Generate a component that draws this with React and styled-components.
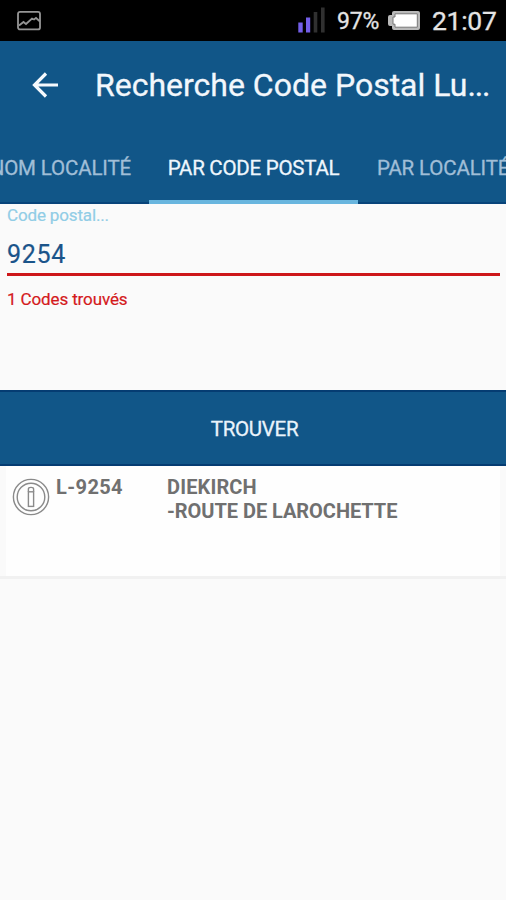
import React from "react";
import styled, { createGlobalStyle } from "styled-components";

const blue = "#115688";

const GlobalStyle = createGlobalStyle`
  * { box-sizing: border-box; }
  body { margin: 0; background: #fafafa; overflow: hidden; }
`;

const Screen = styled.main`
  width: 506px;
  height: 900px;
  overflow: hidden;
  background: #fafafa;
  font-family: Roboto, sans-serif;
  display: flex;
  flex-direction: column;
`;

const StatusBar = styled.div`
  height: 41px;
  flex: none;
  background: #000;
  color: #e4e4e4;
  display: flex;
  align-items: center;
  padding: 0 10px 0 16px;
`;

const SignalIcon = styled.svg`
  margin-left: auto;
  margin-right: 11px;
  margin-top: -2px;
`;

const StatusText = styled.span`
  font-size: ${(p) => p.$size}px;
  width: ${(p) => p.$width}px;
  letter-spacing: ${(p) => p.$spacing || 0}px;
  -webkit-text-stroke: 0.3px currentColor;
  line-height: 30px;
  padding-top: ${(p) => p.$drop || 0}px;
  white-space: nowrap;
`;

const BatteryIcon = styled.svg`
  margin: 0 12px 0 9px;
`;

const AppBar = styled.header`
  height: 89px;
  flex: none;
  background: ${blue};
  color: #f2f7fc;
  display: flex;
  align-items: center;
  padding: 0 0 2px 31px;
`;

const Title = styled.h1`
  margin: 0 0 0 36px;
  font-size: 32px;
  font-weight: 400;
  line-height: 40px;
  letter-spacing: ${(p) => p.$spacing}px;
  -webkit-text-stroke: 0.3px currentColor;
  white-space: nowrap;
`;

const Ellipsis = styled.span`
  letter-spacing: -1.2px;
`;

const Tabs = styled.nav`
  height: 74px;
  flex: none;
  background: ${blue};
  display: flex;
  box-shadow: inset 0 -2px #08447a;
`;

const Tab = styled.div`
  flex: none;
  width: ${(p) => p.$width}px;
  display: flex;
  justify-content: ${(p) => p.$align || "center"};
  padding: 26px ${(p) => p.$padRight || 0}px 0 ${(p) => p.$padLeft || 0}px;
  font-size: 20.5px;
  line-height: 24px;
  letter-spacing: ${(p) => p.$spacing || 0}px;
  -webkit-text-stroke: 0.3px currentColor;
  white-space: nowrap;
  color: ${(p) => (p.$active ? "#eef6fd" : "#a0bed7")};
  border-bottom: ${(p) => (p.$active ? "4px solid #68b5de" : "0")};
`;

const Form = styled.section`
  height: 186px;
  flex: none;
  padding: 0 6px 0 7px;
`;

const Label = styled.div`
  font-size: 17px;
  line-height: 22px;
  letter-spacing: ${(p) => p.$spacing}px;
  -webkit-text-stroke: 0.2px currentColor;
  color: #91cde6;
`;

const Value = styled.div`
  height: 47px;
  padding-top: 10px;
  font-size: 25px;
  line-height: 32px;
  letter-spacing: ${(p) => p.$spacing}px;
  -webkit-text-stroke: 0.2px currentColor;
  color: #1a548a;
  border-bottom: 3px solid #cd1719;
  margin-top: 3px;
`;

const Message = styled.div`
  padding-top: 12px;
  font-size: 17px;
  line-height: 22px;
  letter-spacing: ${(p) => p.$spacing}px;
  -webkit-text-stroke: 0.2px currentColor;
  color: #d4191c;
`;

const FindButton = styled.button`
  height: 76px;
  flex: none;
  border: solid #053c72;
  border-width: 2px 0;
  padding: 2px 0 0 3px;
  background: ${blue};
  color: #e9f3fb;
  font: 400 20.5px/24px Roboto, sans-serif;
  letter-spacing: ${(p) => p.$spacing}px;
  -webkit-text-stroke: 0.3px currentColor;
`;

const ResultRow = styled.article`
  height: 113px;
  flex: none;
  margin: 0;
  padding: 8px 0 0 6px;
  border-bottom: 3px solid #f1f1f1;
  background: linear-gradient(to right, #fafafa 6px, #fefefe 6px 500px, #fafafa 500px);
  display: flex;
  align-items: flex-start;
  color: #707070;
`;

const InfoIcon = styled.svg`
  margin: 4px 6px 0;
`;

const ResultText = styled.div`
  width: ${(p) => p.$width}px;
  flex: none;
  font-size: 20px;
  line-height: 24px;
  font-weight: 700;
  padding-top: 1px;
  white-space: nowrap;
`;

const Line = styled.div`
  letter-spacing: ${(p) => p.$spacing}px;
`;

export default function App() {
  return (
    <Screen>
      <GlobalStyle />
      <StatusBar>
        <svg width="26" height="21" viewBox="0 0 26 21" fill="none" stroke="#969696" strokeWidth="1.8">
          <rect x="2" y="1.9" width="22" height="17.5" rx="2" />
          <path d="M3 15.5l4.5-3.5 2.5 2 6-5.5 2 1 2-1.5L24 11.5" />
        </svg>
        <SignalIcon width="28" height="26" viewBox="0 0 28 26">
          <rect x="0.3" y="15.5" width="4.4" height="10" fill="#735ee8" />
          <rect x="8" y="10.5" width="4.2" height="15" fill="#735ee8" />
          <rect x="15.7" y="5" width="3.6" height="20.5" fill="#303030" />
          <rect x="23" y="0.5" width="3.6" height="25" fill="#303030" />
        </SignalIcon>
        <StatusText $size={23} $width={42} $spacing={-0.2} $drop={3}>97%</StatusText>
        <BatteryIcon width="32" height="19" viewBox="0 0 32 19">
          <path d="M6 0h24q2 0 2 2v15q0 2-2 2H6q-2 0-2-2v-2H2q-2 0-2-2V6q0-2 2-2h2V2q0-2 2-2z" fill="#b9b9b9" />
          <path d="M7 2.8h22.3v13.4H7v-3H5V6h2z" fill="#fff" stroke="#777" />
        </BatteryIcon>
        <StatusText $size={26.5} $width={64} $spacing={-0.3} $drop={1}>21:07</StatusText>
      </StatusBar>
      <AppBar>
        <svg width="28" height="26" viewBox="0 0 28 26" fill="none" stroke="#f5f9fd" strokeWidth="3.2">
          <path d="M15 1.5L3.5 13 15 24.5M3.5 13H27" />
        </svg>
        <Title $spacing={0}>Recherche Code Postal Lu<Ellipsis>...</Ellipsis></Title>
      </AppBar>
      <Tabs>
        <Tab $width={149} $align="flex-end" $padRight={18} $spacing={-0.15}>PAR NOM LOCALITÉ</Tab>
        <Tab $width={209} $active $spacing={-0.25}>PAR CODE POSTAL</Tab>
        <Tab $width={170} $align="flex-start" $padLeft={19} $spacing={-0.15}>PAR LOCALITÉ</Tab>
      </Tabs>
      <Form>
        <Label $spacing={-0.15}>Code postal...</Label>
        <Value $spacing={0.7}>9254</Value>
        <Message $spacing={-0.12}>1 Codes trouvés</Message>
      </Form>
      <FindButton $spacing={-0.3}>TROUVER</FindButton>
      <ResultRow>
        <InfoIcon width="38" height="38" viewBox="0 0 38 38" fill="none" stroke="#8a8a8a" strokeWidth="1.4">
          <circle cx="19" cy="19" r="17.6" />
          <circle cx="19" cy="19" r="13.8" />
          <rect x="16.4" y="13.8" width="5.2" height="14.6" />
          <path d="M16.4 13.8V11q0-1.6 2.6-1.6t2.6 1.6v2.8" />
        </InfoIcon>
        <ResultText $width={111}><Line $spacing={0.4}>L-9254</Line></ResultText>
        <ResultText $width={320}>
          <Line $spacing={0.15}>DIEKIRCH</Line>
          <Line $spacing={-0.05}>-ROUTE DE LAROCHETTE</Line>
        </ResultText>
      </ResultRow>
    </Screen>
  );
}
